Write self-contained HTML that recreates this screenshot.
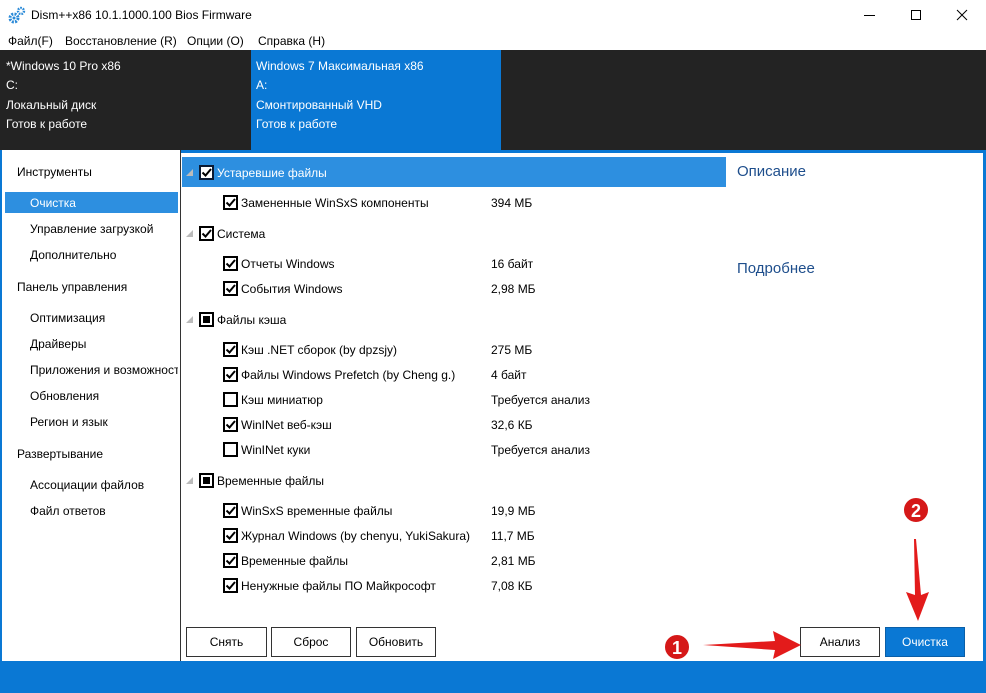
<!DOCTYPE html>
<html><head><meta charset="utf-8"><style>
*{margin:0;padding:0;box-sizing:border-box}
body{width:986px;height:693px;position:relative;overflow:hidden;background:#fff;font-family:"Liberation Sans","DejaVu Sans",sans-serif;font-size:12px;color:#000}
.a{position:absolute;white-space:nowrap}
.cb{position:absolute;width:15px;height:15px;border:2px solid #000;background:#fff}
.cb svg{position:absolute;left:0;top:0}
.fill{position:absolute;left:2px;top:2px;width:7px;height:7px;background:#000}
.tri{position:absolute;width:0;height:0;border-left:7px solid transparent;border-bottom:7px solid #bbb}
.btn{position:absolute;height:30px;border:1px solid #333;background:#fff;text-align:center;line-height:28px;font-size:12px}
</style></head><body>
<svg class="a" style="left:8px;top:6px" width="18" height="18" viewBox="0 0 18 18"><circle cx="6" cy="12" r="4" fill="none" stroke="#2b8ad8" stroke-width="3" stroke-dasharray="2 1.2"/><circle cx="6" cy="12" r="1.5" fill="#2b8ad8"/><circle cx="13" cy="5" r="3" fill="none" stroke="#2b8ad8" stroke-width="2.4" stroke-dasharray="1.6 1"/></svg>
<div class="a" style="left:31px;top:8px;font-size:12px">Dism++x86 10.1.1000.100 Bios Firmware</div>
<div class="a" style="left:864px;top:15px;width:11px;height:1px;background:#000"></div>
<div class="a" style="left:911px;top:10px;width:10px;height:10px;border:1px solid #000"></div>
<svg class="a" style="left:956px;top:9px" width="12" height="12"><path d="M1 1L11 11M11 1L1 11" stroke="#000" stroke-width="1"/></svg>
<div class="a" style="left:8px;top:34px">Файл(F)</div>
<div class="a" style="left:65px;top:34px">Восстановление (R)</div>
<div class="a" style="left:187px;top:34px">Опции (O)</div>
<div class="a" style="left:258px;top:34px">Справка (H)</div>
<div class="a" style="left:0;top:50px;width:986px;height:100px;background:#232323"></div>
<div class="a" style="left:251px;top:50px;width:250px;height:100px;background:#0a78d4"></div>
<div class="a" style="left:6px;top:57px;color:#fff;line-height:19.3px">*Windows 10 Pro x86<br>C:<br>Локальный диск<br>Готов к работе</div>
<div class="a" style="left:256px;top:57px;color:#fff;line-height:19.3px">Windows 7 Максимальная x86<br>A:<br>Смонтированный VHD<br>Готов к работе</div>
<div class="a" style="left:0;top:150px;width:986px;height:3px;background:#0a78d4"></div>
<div class="a" style="left:0;top:150px;width:2px;height:520px;background:#0a78d4"></div>
<div class="a" style="left:983px;top:150px;width:3px;height:520px;background:#0a78d4"></div>
<div class="a" style="left:2px;top:150px;width:179px;height:511px;background:#fff;border-right:1px solid #333"></div>
<div class="a" style="left:17px;top:165px">Инструменты</div>
<div class="a" style="left:5px;top:192px;width:173px;height:21px;background:#2d8fe0"></div>
<div class="a" style="left:30px;top:196px;color:#fff">Очистка</div>
<div class="a" style="left:30px;top:222px">Управление загрузкой</div>
<div class="a" style="left:30px;top:248px">Дополнительно</div>
<div class="a" style="left:17px;top:280px">Панель управления</div>
<div class="a" style="left:30px;top:311px">Оптимизация</div>
<div class="a" style="left:30px;top:337px">Драйверы</div>
<div class="a" style="left:30px;top:363px;width:148px;overflow:hidden">Приложения и возможности</div>
<div class="a" style="left:30px;top:389px">Обновления</div>
<div class="a" style="left:30px;top:415px">Регион и язык</div>
<div class="a" style="left:17px;top:447px">Развертывание</div>
<div class="a" style="left:30px;top:478px">Ассоциации файлов</div>
<div class="a" style="left:30px;top:504px">Файл ответов</div>
<div class="a" style="left:182px;top:157px;width:544px;height:30px;background:#2d8fe0"></div>
<div id="list"></div>
<div class="a" style="left:737px;top:163px;font-size:15px;color:#1e4e8c">Описание</div>
<div class="a" style="left:737px;top:260px;font-size:15px;color:#1e4e8c">Подробнее</div>
<div class="btn" style="left:186px;top:627px;width:81px">Снять</div>
<div class="btn" style="left:271px;top:627px;width:80px">Сброс</div>
<div class="btn" style="left:356px;top:627px;width:80px">Обновить</div>
<div class="btn" style="left:800px;top:627px;width:80px">Анализ</div>
<div class="btn" style="left:885px;top:627px;width:80px;background:#0a78d4;color:#fff;border-color:#0a5fa8">Очистка</div>
<div class="a" style="left:0;top:661px;width:986px;height:32px;background:#0a78d4"></div>
<svg class="a" style="left:655px;top:495px" width="331" height="175">
<path d="M48 150 L120 146 L118 136 L146 150 L118 164 L120 155 Z" fill="#e31b1b"/>
<path d="M261 44 L259 44 L260 100 L251 97 L263 126 L274 97 L266 100 Z" fill="#e31b1b"/>
<circle cx="22" cy="152" r="13" fill="#d51818" stroke="#fff" stroke-width="2"/>
<text x="22" y="159" font-family="Liberation Sans" font-weight="bold" font-size="18" fill="#fff" text-anchor="middle">1</text>
<circle cx="261" cy="15" r="13" fill="#d51818" stroke="#fff" stroke-width="2"/>
<text x="261" y="22" font-family="Liberation Sans" font-weight="bold" font-size="18" fill="#fff" text-anchor="middle">2</text>
</svg>
<script>
var rows=[
[0,173,'Устаревшие файлы','',1,1],
[1,203,'Замененные WinSxS компоненты','394 МБ',1],
[0,234,'Система','',1],
[1,264,'Отчеты Windows','16 байт',1],
[1,289,'События Windows','2,98 МБ',1],
[0,320,'Файлы кэша','',2],
[1,350,'Кэш .NET сборок (by dpzsjy)','275 МБ',1],
[1,375,'Файлы Windows Prefetch (by Cheng g.)','4 байт',1],
[1,400,'Кэш миниатюр','Требуется анализ',0],
[1,425,'WinINet веб-кэш','32,6 КБ',1],
[1,450,'WinINet куки','Требуется анализ',0],
[0,481,'Временные файлы','',2],
[1,511,'WinSxS временные файлы','19,9 МБ',1],
[1,536,'Журнал Windows (by chenyu, YukiSakura)','11,7 МБ',1],
[1,561,'Временные файлы','2,81 МБ',1],
[1,586,'Ненужные файлы ПО Майкрософт','7,08 КБ',1]];
var h='';
rows.forEach(function(r){
 var x=r[0]?223:199,y=r[1]-8,sel=r[5];
 if(!r[0])h+='<div class="tri" style="left:186px;top:'+(r[1]-4)+'px"></div>';
 h+='<div class="cb" style="left:'+x+'px;top:'+y+'px;'+(sel?'border-color:#0b1a33;background:#fff':'')+'">';
 if(r[4]==1)h+='<svg width="11" height="11"><path d="M1.5 5.5L4.5 8.5L10 2" stroke="#000" stroke-width="2" fill="none"/></svg>';
 if(r[4]==2)h+='<div class="fill"></div>';
 h+='</div>';
 h+='<div class="a" style="left:'+(x+18)+'px;top:'+(r[1]-7)+'px;'+(sel?'color:#fff':'')+'">'+r[2]+'</div>';
 if(r[3])h+='<div class="a" style="left:491px;top:'+(r[1]-7)+'px">'+r[3]+'</div>';
});
document.getElementById('list').innerHTML=h;
</script>
</body></html>
